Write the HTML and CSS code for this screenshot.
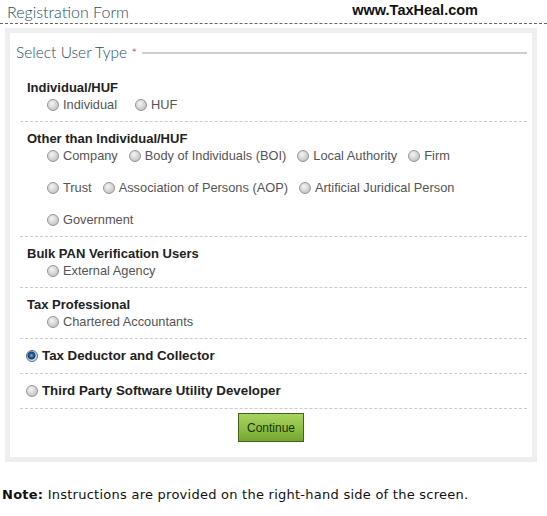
FILE: index.html
```html
<!DOCTYPE html>
<html lang="en">
<head>
  <meta charset="UTF-8">
  <title>Registration Form</title>
  <link rel="stylesheet" href="styles.css">
</head>
<body>
  <div class="top-bar">
    <span class="form-title">Registration Form</span>
    <span class="site-name">www.TaxHeal.com</span>
  </div>

  <div class="form-box">
    <div class="legend">
      <span class="legend-text">Select User Type <em>*</em></span>
      <span class="legend-line"></span>
    </div>

    <div class="group">
      <h3>Individual/HUF</h3>
      <div class="opts">
        <label class="opt wide"><input type="radio" name="utype"> Individual</label>
        <label class="opt"><input type="radio" name="utype"> HUF</label>
      </div>
    </div>

    <div class="group">
      <h3>Other than Individual/HUF</h3>
      <div class="opts">
        <label class="opt"><input type="radio" name="utype"> Company</label>
        <label class="opt"><input type="radio" name="utype"> Body of Individuals (BOI)</label>
        <label class="opt"><input type="radio" name="utype"> Local Authority</label>
        <label class="opt"><input type="radio" name="utype"> Firm</label>
      </div>
      <div class="opts spaced">
        <label class="opt"><input type="radio" name="utype"> Trust</label>
        <label class="opt"><input type="radio" name="utype"> Association of Persons (AOP)</label>
        <label class="opt"><input type="radio" name="utype"> Artificial Juridical Person</label>
      </div>
      <div class="opts spaced">
        <label class="opt"><input type="radio" name="utype"> Government</label>
      </div>
    </div>

    <div class="group">
      <h3>Bulk PAN Verification Users</h3>
      <div class="opts">
        <label class="opt"><input type="radio" name="utype"> External Agency</label>
      </div>
    </div>

    <div class="group">
      <h3>Tax Professional</h3>
      <div class="opts">
        <label class="opt"><input type="radio" name="utype"> Chartered Accountants</label>
      </div>
    </div>

    <div class="group single">
      <label class="opt main"><input type="radio" name="utype" checked> Tax Deductor and Collector</label>
    </div>

    <div class="group single">
      <label class="opt main"><input type="radio" name="utype"> Third Party Software Utility Developer</label>
    </div>

    <div class="actions">
      <button type="button" class="btn-continue">Continue</button>
    </div>
  </div>

  <p class="note"><b>Note:</b> Instructions are provided on the right-hand side of the screen.</p>
</body>
</html>
```

FILE: styles.css
```css
body {
  margin: 0;
  font-family: "Liberation Sans", Arial, sans-serif;
  font-size: 12px;
  color: #333;
  background: #fff;
}
.top-bar {
  display: flex;
  align-items: flex-end;
  height: 23px;
  border-bottom: 1px dashed #666;
}
.form-title {
  margin-left: 7px;
  font-family: Lato, sans-serif;
  font-weight: 300;
  font-size: 16px;
  line-height: 22px;
  color: #1f4f62;
}
.site-name {
  margin-left: auto;
  margin-right: 69px;
  margin-bottom: 4px;
  font-weight: bold;
  font-size: 14.5px;
  line-height: 17px;
  color: #111;
}
.form-box {
  width: 517px;
  margin: 4px 0 0 5px;
  border: 5px solid #eeeeee;
  padding: 9px 5px 15px 0;
}
.legend {
  display: flex;
  align-items: center;
  gap: 5px;
  padding: 0 0 8px 6px;
  line-height: 20px;
}
.legend-text {
  font-family: Lato, sans-serif;
  font-weight: 300;
  font-size: 15.5px;
  color: #1f4f62;
}
.legend-text em {
  font-style: normal;
  color: #c8322c;
  font-size: 14px;
}
.legend-line {
  flex: 1;
  height: 2px;
  background: #cfcfcf;
}
.group {
  margin: 0 0 0 10px;
  padding: 8px 0 8px 7px;
  border-bottom: 1px dashed #cccccc;
}
.group h3 {
  margin: 0;
  font-size: 13px;
  line-height: 17px;
  color: #222;
}
.opts {
  display: flex;
  padding-left: 20px;
  line-height: 17px;
}
.opts.spaced {
  margin-top: 15px;
}
.opt {
  display: inline-flex;
  align-items: center;
  gap: 4px;
  margin-right: 11px;
  font-size: 12.8px;
  color: #555;
}
.opt.wide {
  margin-right: 18px;
}
.opt.main {
  margin-left: -1px;
  font-weight: bold;
  font-size: 13.3px;
  line-height: 18px;
  color: #222;
}
input[type="radio"] {
  appearance: none;
  -webkit-appearance: none;
  width: 12px;
  height: 12px;
  margin: 0;
  border: 1px solid #969696;
  border-radius: 50%;
  background: radial-gradient(circle at 40% 35%, #f5f5f5 0, #d8d8d8 45%, #b5b5b5 100%);
}
input[type="radio"]:checked {
  border-color: #4b6f93;
  background: radial-gradient(circle at 45% 45%, #7fb4e6 0, #2a5f93 2px, #163e66 3.5px, #cfdbe6 4.5px, #e9eef3 100%);
}
.actions {
  text-align: center;
  padding-top: 4px;
  padding-left: 5px;
}
.btn-continue {
  width: 66px;
  height: 29px;
  border: 1px solid #44621b;
  background: linear-gradient(#a9d360, #8cbf45 55%, #74a530);
  color: #1a3304;
  font-family: "Liberation Sans", Arial, sans-serif;
  font-size: 12px;
  padding: 0;
  cursor: pointer;
}
.note {
  margin: 25px 0 0 2px;
  font-family: "DejaVu Sans", Verdana, sans-serif;
  font-size: 13px;
  letter-spacing: 0.25px;
  line-height: 16px;
  color: #111;
}
```
